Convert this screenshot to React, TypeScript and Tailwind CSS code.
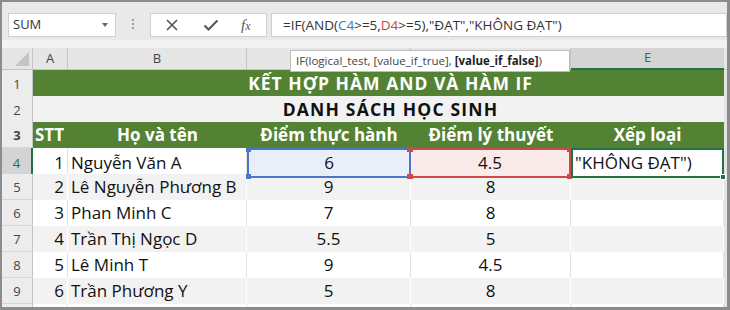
import clsx from 'clsx';

const cols = 'grid grid-cols-[31px_35px_179px_164px_160px_153px_3px]';
const cellFont = { fontFamily: '"Open Sans", "Noto Sans", sans-serif' };

const students: [number, string, string, string][] = [
  [1, 'Nguyễn Văn A', '6', '4.5'],
  [2, 'Lê Nguyễn Phương B', '9', '8'],
  [3, 'Phan Minh C', '7', '8'],
  [4, 'Trần Thị Ngọc D', '5.5', '5'],
  [5, 'Lê Minh T', '9', '4.5'],
  [6, 'Trần Phương Y', '5', '8'],
];

function RowHead({ n, active }: { n: number | string; active?: boolean }) {
  return (
    <div
      className={clsx(
        'flex items-center justify-center border-b border-[#d6d6d6] pt-[3px] text-[13px]',
        active
          ? 'bg-[#d4d4d4] text-[#217346] border-r-2 border-r-[#217346]'
          : 'bg-[#ececec] text-[#444] border-r border-r-[#c4c4c4]'
      )}
    >
      {n}
    </div>
  );
}

function Handle({ pos, color }: { pos: string; color: string }) {
  return <span className={clsx('absolute h-[5px] w-[5px]', pos, color)} />;
}

function XIcon() {
  return (
    <svg width="14" height="14" viewBox="0 0 14 14">
      <path d="M2 2 L12 12 M12 2 L2 12" stroke="#555" strokeWidth="1.6" />
    </svg>
  );
}

function CheckIcon() {
  return (
    <svg width="16" height="14" viewBox="0 0 16 14">
      <path d="M1.5 7.5 L5.5 11.5 L14.5 2.5" stroke="#555" strokeWidth="2" fill="none" />
    </svg>
  );
}

export default function App() {
  return (
    <div className="h-[310px] w-[730px] overflow-hidden bg-[#8c8c8c] pb-[3px] pl-[2px] pr-[3px] pt-[2px]">
      <div className="flex h-full flex-col overflow-hidden bg-[#f0f0f0]" style={{ fontFamily: '"Open Sans", "Noto Sans", sans-serif' }}>
        {/* formula bar */}
        <div className="flex h-[38px] shrink-0 items-start bg-[#e9e9e9] pl-[6px] pt-[11px]">
          <div className="flex h-[24px] w-[108px] items-center justify-between border border-[#d0d0d0] bg-white pl-[4px] pr-[7px] text-[13px] text-[#333]">
            <span>SUM</span>
            <span className="h-0 w-0 border-x-[3.5px] border-t-[4px] border-x-transparent border-t-[#666]" />
          </div>
          <div className="flex w-[34px] flex-col items-center gap-[2px] pt-[6px]">
            <span className="h-[2px] w-[2px] bg-[#9a9a9a]" />
            <span className="h-[2px] w-[2px] bg-[#9a9a9a]" />
            <span className="h-[2px] w-[2px] bg-[#9a9a9a]" />
          </div>
          <div className="flex h-[24px] w-[117px] items-center border border-[#d0d0d0] bg-white pl-[14px]">
            <XIcon />
            <span className="ml-[24px]">
              <CheckIcon />
            </span>
            <span className="ml-[22px] text-[15px] italic text-[#555]" style={{ fontFamily: '"Liberation Serif", serif' }}>
              f<span className="text-[12px]">x</span>
            </span>
          </div>
          <div className="ml-[4px] flex h-[24px] flex-1 items-center border border-[#d0d0d0] bg-white pl-[11px] text-[13.5px] text-[#333]">
            <span>
              =IF(AND(<span className="text-[#3f6fc6]">C4</span>&gt;=5,<span className="text-[#c9443e]">D4</span>&gt;=5),"ĐẠT","KHÔNG ĐẠT")
            </span>
          </div>
        </div>
        <div className="h-[8px] shrink-0 bg-[#f3f3f3]" />

        {/* sheet */}
        <div className="relative shrink-0">
          {/* column headers (C and D sit under the tooltip) */}
          <div className={clsx(cols, 'h-[22px] text-[13px] text-[#444]')}>
            <div className="relative border-b border-r border-[#c4c4c4] bg-[#e6e6e6]">
              <span className="absolute bottom-[3px] right-[3px] h-0 w-0 border-b-[14px] border-l-[14px] border-b-[#c4c4c4] border-l-transparent" />
            </div>
            <div className="flex items-center justify-center border-b border-r border-[#c4c4c4] bg-[#e6e6e6]">A</div>
            <div className="flex items-center justify-center border-b border-r border-[#c4c4c4] bg-[#e6e6e6]">B</div>
            <div className="border-b border-r border-[#c4c4c4] bg-[#e6e6e6]" />
            <div className="border-b border-r border-[#c4c4c4] bg-[#e6e6e6]" />
            <div className="flex items-center justify-center border-b-2 border-b-[#217346] bg-[#d4d4d4] text-[#217346]">E</div>
            <div className="border-b border-[#c4c4c4] bg-[#e6e6e6]" />
          </div>

          <div style={cellFont}>
            {/* row 1 */}
            <div className={clsx(cols, 'h-[26px]')}>
              <RowHead n={1} />
              <div className="col-span-5 flex items-center justify-center border-b border-white bg-[#548235] pl-[24px] text-[17.5px] font-bold tracking-[1px] text-white">
                KẾT HỢP HÀM AND VÀ HÀM IF
              </div>
              <div className="bg-[#e4e4e4]" />
            </div>
            {/* row 2 */}
            <div className={clsx(cols, 'h-[26px]')}>
              <RowHead n={2} />
              <div className="col-span-5 flex items-center justify-center border-b border-white bg-[#f2f2f2] pl-[24px] text-[17.5px] font-bold tracking-[1.2px] text-[#111]">
                DANH SÁCH HỌC SINH
              </div>
              <div className="bg-[#e4e4e4]" />
            </div>
            {/* row 3 */}
            <div className={clsx(cols, 'h-[26px] text-[17px] font-bold text-white')}>
              <RowHead n={3} />
              <div className="flex items-center bg-[#548235] pl-[2px]">STT</div>
              <div className="flex items-center justify-center bg-[#548235]">Họ và tên</div>
              <div className="flex items-center justify-center bg-[#548235]">Điểm thực hành</div>
              <div className="flex items-center justify-center bg-[#548235]">Điểm lý thuyết</div>
              <div className="flex items-center justify-center bg-[#548235]">Xếp loại</div>
              <div className="bg-[#e4e4e4]" />
            </div>
            {/* data rows */}
            {students.map(([stt, name, th, lt], i) => {
              const grey = i % 2 === 1;
              const first = i === 0;
              const row = clsx(grey ? 'bg-[#f2f2f2] border-white' : 'bg-white border-[#e2e2e2]');
              return (
                <div key={stt} className={clsx(cols, 'h-[26px] text-[17px] text-[#111]')}>
                  <RowHead n={stt + 3} active={first} />
                  <div className={clsx(row, 'flex items-center justify-end border-r pr-[3px]')}>{stt}</div>
                  <div className={clsx(row, 'flex items-center border-r pl-[3px]')}>{name}</div>
                  {first ? (
                    <>
                      <div className="relative flex items-center justify-center border-2 border-[#4a78c9] bg-[#e9eef8]">
                        {th}
                        <Handle pos="-left-[3px] -top-[3px]" color="bg-[#4a78c9]" />
                        <Handle pos="-right-[3px] -top-[3px]" color="bg-[#4a78c9]" />
                        <Handle pos="-left-[3px] -bottom-[3px]" color="bg-[#4a78c9]" />
                        <Handle pos="-right-[3px] -bottom-[3px]" color="bg-[#4a78c9]" />
                      </div>
                      <div className="relative flex items-center justify-center border-2 border-l-0 border-[#cc4a4a] bg-[#fbeaea]">
                        {lt}
                        <Handle pos="-left-[3px] -top-[3px]" color="bg-[#cc4a4a]" />
                        <Handle pos="-right-[3px] -top-[3px]" color="bg-[#cc4a4a]" />
                        <Handle pos="-left-[3px] -bottom-[3px]" color="bg-[#cc4a4a]" />
                        <Handle pos="-right-[3px] -bottom-[3px]" color="bg-[#cc4a4a]" />
                      </div>
                      <div className="relative flex items-center border-2 border-[#217346] bg-white pl-[2px]">
                        "KHÔNG ĐẠT")
                        <span className="absolute -bottom-[4px] -right-[4px] h-[6px] w-[6px] border border-white bg-[#217346]" />
                      </div>
                    </>
                  ) : (
                    <>
                      <div className={clsx(row, 'flex items-center justify-center border-r')}>{th}</div>
                      <div className={clsx(row, 'flex items-center justify-center border-r')}>{lt}</div>
                      <div className={clsx(row, 'border-r')} />
                    </>
                  )}
                  <div className="bg-[#e4e4e4]" />
                </div>
              );
            })}
            {/* partial row 10 */}
            <div className={clsx(cols, 'h-[26px]')}>
              <div className="border-r border-[#c4c4c4] bg-[#ececec]" />
              <div className="border-r border-[#e2e2e2] bg-white" />
              <div className="border-r border-[#e2e2e2] bg-white" />
              <div className="border-r border-[#e2e2e2] bg-white" />
              <div className="border-r border-[#e2e2e2] bg-white" />
              <div className="border-r border-[#e2e2e2] bg-white" />
              <div className="bg-[#e4e4e4]" />
            </div>
          </div>

          {/* function tooltip */}
          <div className="absolute left-[288px] top-[2px] flex h-[22px] w-[280px] items-center border border-[#bdbdbd] bg-white pl-[5px] text-[11.5px] text-[#444]">
            IF(logical_test, [value_if_true],&nbsp;<b className="text-[#222]">[value_if_false]</b>)
          </div>
        </div>
      </div>
    </div>
  );
}
